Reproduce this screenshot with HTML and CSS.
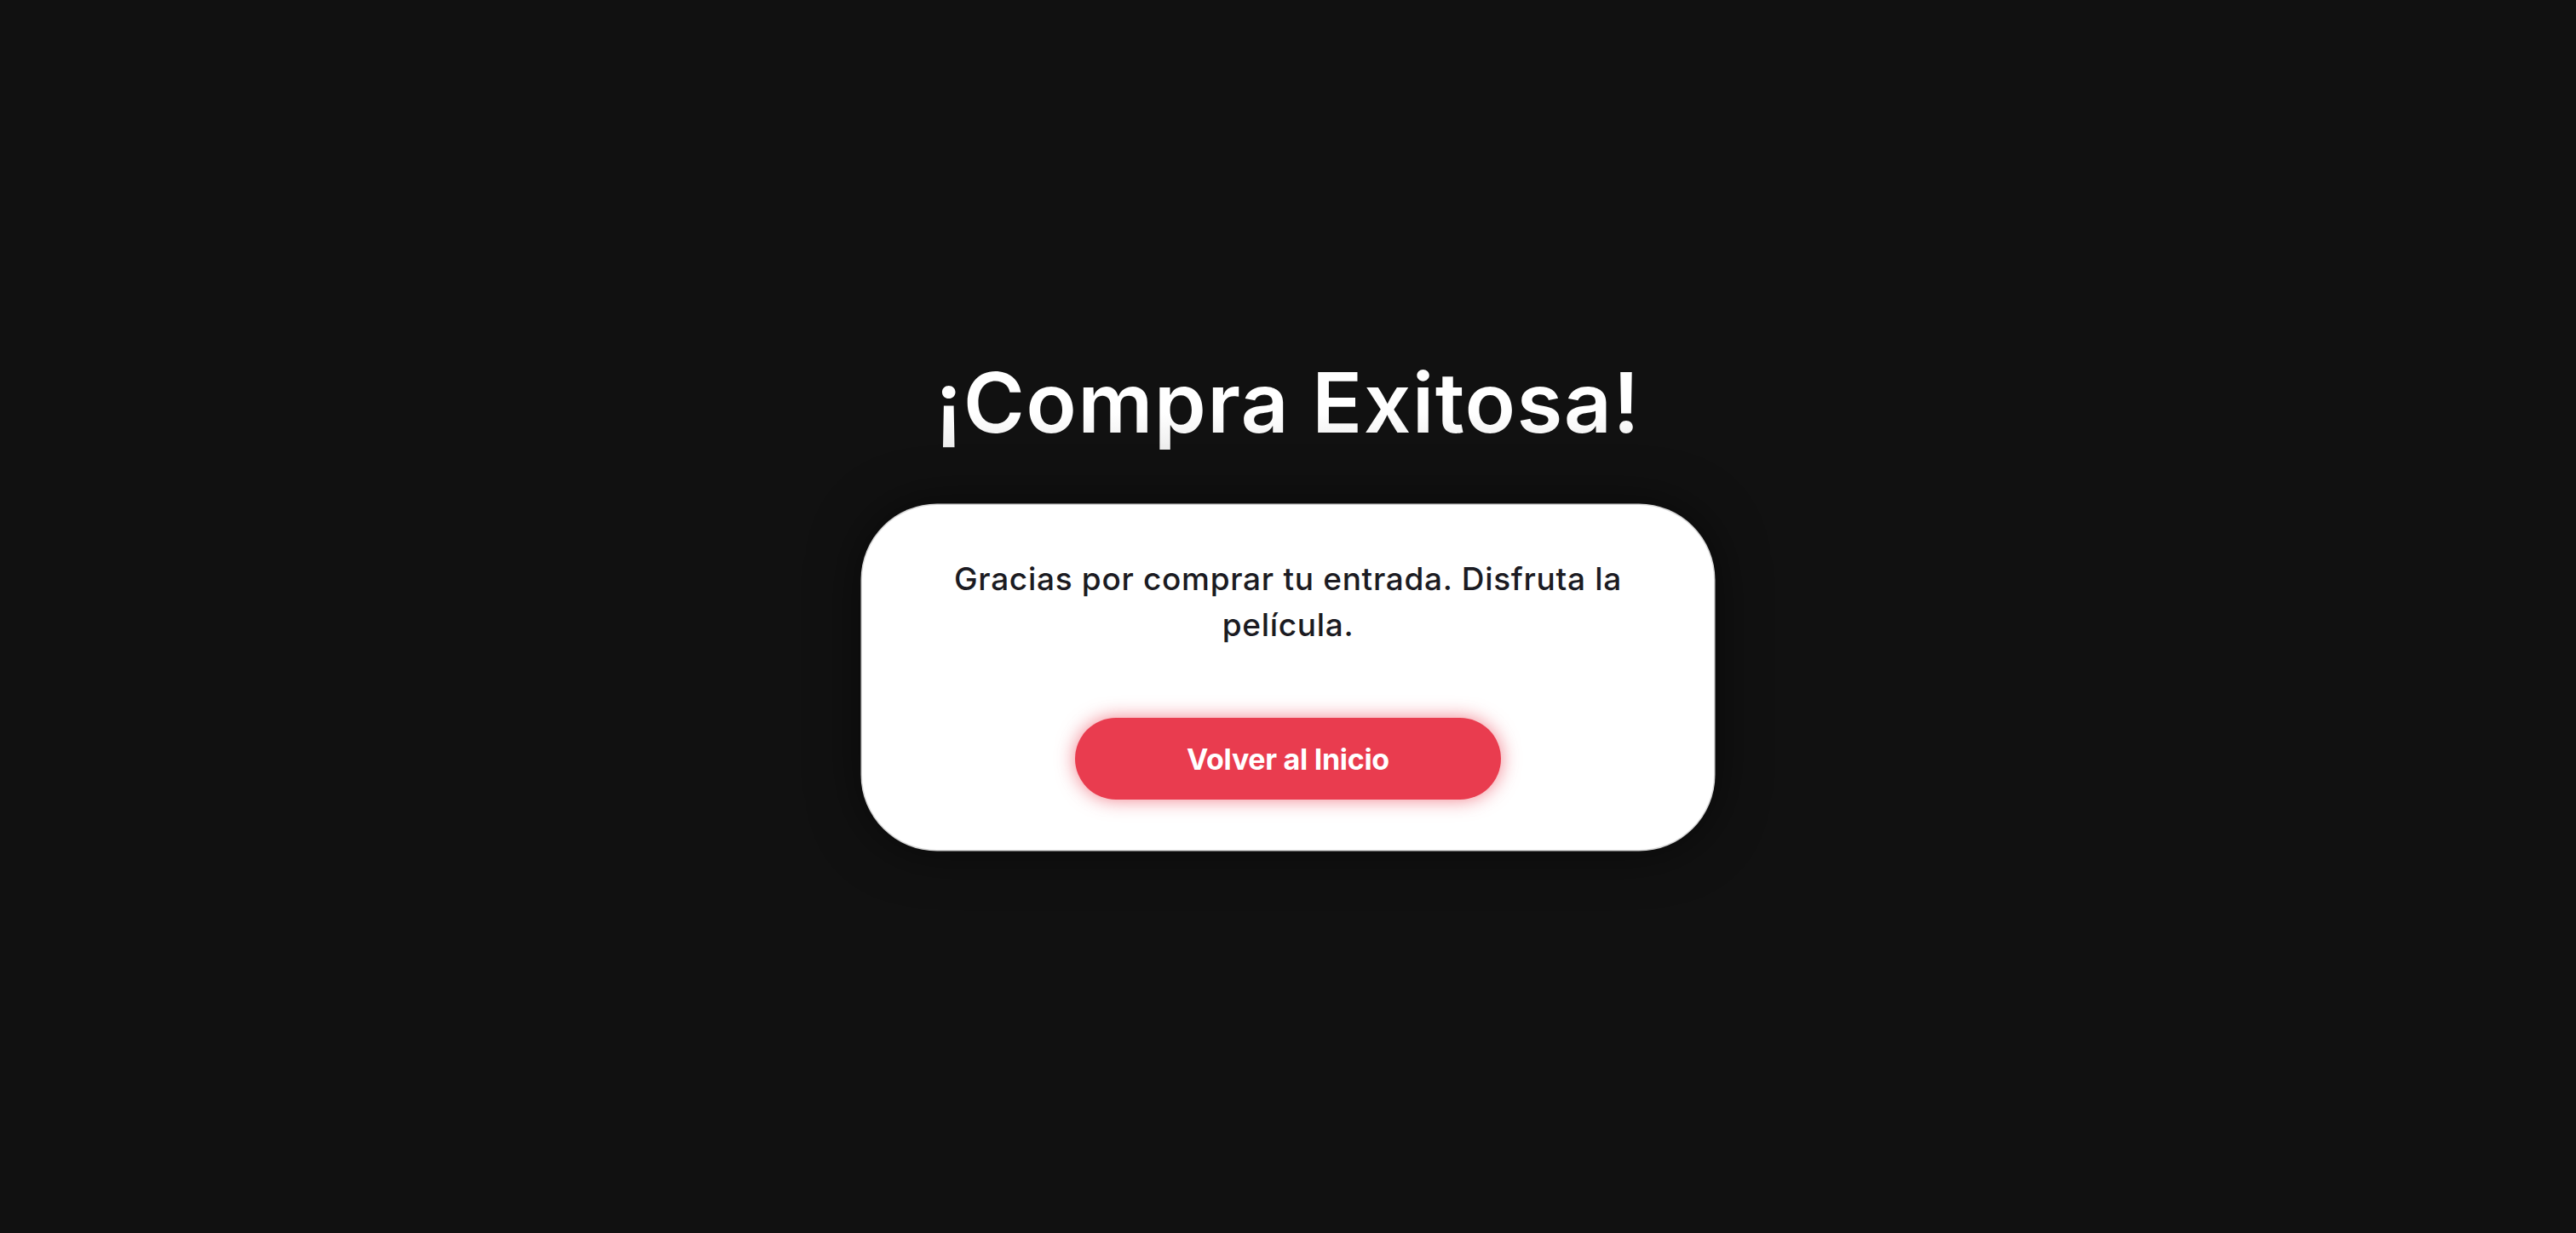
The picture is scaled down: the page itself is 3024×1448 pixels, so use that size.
FILE: index.html
```html
<!DOCTYPE html>
<html lang="es">
<head>
<meta charset="utf-8">
<title>Compra Exitosa</title>
<link rel="stylesheet" href="styles.css">
</head>
<body>
<main class="page">
  <h1 class="title">¡Compra Exitosa!</h1>
  <section class="card">
    <p class="message">Gracias por comprar tu entrada. Disfruta la película.</p>
    <a class="btn" href="#">Volver al Inicio</a>
  </section>
</main>
</body>
</html>
```

FILE: styles.css
```css
html, body {
  margin: 0;
  padding: 0;
  background: #111111;
}

.page {
  box-sizing: border-box;
  min-height: 100vh;
  padding-bottom: 36px;
  display: flex;
  flex-direction: column;
  align-items: center;
  justify-content: center;
  font-family: "Inter", "Open Sans", sans-serif;
}

.title {
  margin: 0 0 62px;
  font-size: 98px;
  font-weight: 600;
  line-height: 1.2;
  color: #ffffff;
  letter-spacing: 1.3px;
  background: linear-gradient(#ffffff 60%, #ececec);
  -webkit-background-clip: text;
  background-clip: text;
  -webkit-text-fill-color: transparent;
}

.card {
  box-sizing: border-box;
  width: 1000px;
  padding: 60px 80px 59px;
  background: #ffffff;
  border-radius: 88px;
  box-shadow: 0 0 0 1.5px #d6d6d6, 0 0 60px rgba(0, 0, 0, 0.55);
  display: flex;
  flex-direction: column;
  align-items: center;
}

.message {
  margin: 0 0 82px;
  max-width: 820px;
  text-align: center;
  font-size: 37px;
  font-weight: 500;
  letter-spacing: 0.7px;
  line-height: 54px;
  color: #1b1b22;
}

.btn {
  display: flex;
  align-items: center;
  justify-content: center;
  width: 500px;
  height: 96px;
  border-radius: 48px;
  background: #e93c4f;
  color: #ffffff;
  text-decoration: none;
  font-size: 34px;
  font-weight: 700;
  letter-spacing: -0.3px;
  box-shadow: 0 0 22px rgba(233, 60, 79, 0.65);
}
```
